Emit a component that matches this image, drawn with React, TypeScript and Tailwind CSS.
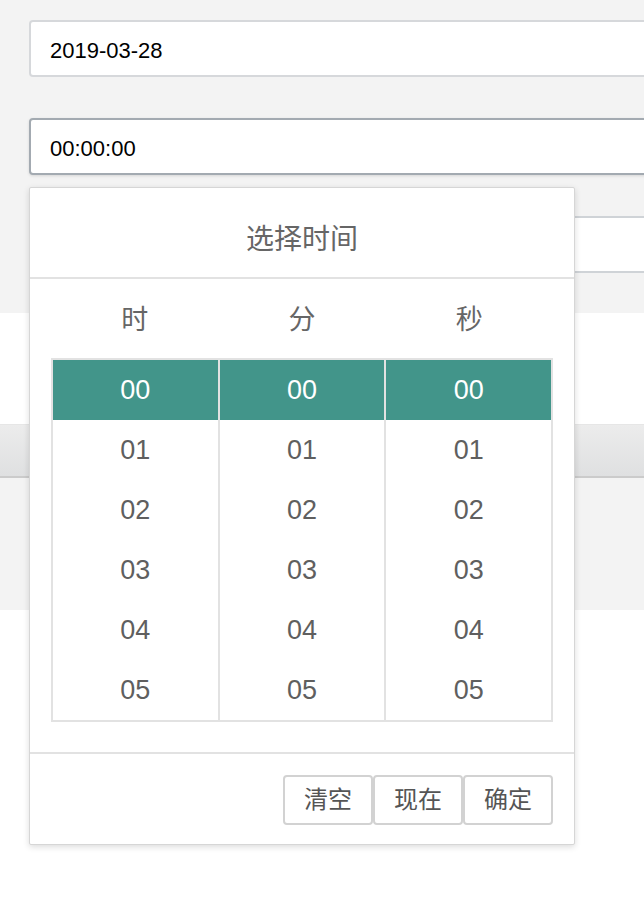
import { useState } from 'react'

const pad = (n: number) => String(n).padStart(2, '0')
const rows = [0, 1, 2, 3, 4, 5]
const cols = ['时', '分', '秒']

export default function App() {
  const [value] = useState('00:00:00')

  return (
    <div
      className="relative w-[644px] h-[914px] overflow-hidden bg-white"
      style={{ fontFamily: '"Liberation Sans", "Noto Sans CJK SC", sans-serif' }}
    >
      {/* form area */}
      <div className="bg-[#f3f3f3] pt-[20px] pb-[40px] pl-[29px] flex flex-col gap-[41px]">
        <div className="h-[57px] -mr-[20px] bg-white border-2 border-[#d6d8db] rounded-[4px] flex items-center pl-[19px] pt-[4px] text-[22px] text-black">
          2019-03-28
        </div>
        <div className="h-[57px] -mr-[20px] bg-white border-2 border-[#a3aab1] rounded-[4px] flex items-center pl-[19px] pt-[4px] text-[22px] text-black shadow-[0_1px_3px_rgba(0,0,0,0.12)]">
          {value}
        </div>
        <div className="h-[57px] -mr-[20px] bg-white border-2 border-[#cfd3d7] rounded-[4px]" />
      </div>
      <div className="h-[111px] bg-white" />
      <div className="h-[54px] bg-gradient-to-b from-[#ececec] to-[#dfe0e1] border-t border-[#e6e6e6] border-b-2 border-b-[#cbcbcb]" />
      <div className="h-[132px] bg-[#f3f3f3]" />

      {/* time picker popup */}
      <div className="absolute left-[29px] top-[187px] w-[546px] bg-white border border-[#d6d6d6] rounded-[2px] shadow-[0_2px_6px_rgba(0,0,0,0.14)] text-[#666]">
        <div className="h-[91px] border-b-2 border-[#e2e2e2] flex items-center justify-center pt-[14px] text-[28px]">
          选择时间
        </div>
        <div className="px-[21px]">
          <div className="flex h-[79px] items-center">
            {cols.map((c) => (
              <div key={c} className="flex-1 text-center text-[27px] pt-[4px]">
                {c}
              </div>
            ))}
          </div>
          <div className="flex border-2 border-[#e2e2e2]">
            {cols.map((c, i) => (
              <ul key={c} className={`flex-1 ${i > 0 ? 'border-l-2 border-[#e2e2e2]' : ''}`}>
                {rows.map((r) => (
                  <li
                    key={r}
                    className={`h-[60px] flex items-center justify-center text-[27px] ${
                      r === 0 ? 'bg-[#42958a] text-white' : 'text-[#5f5f5f]'
                    }`}
                  >
                    {pad(r)}
                  </li>
                ))}
              </ul>
            ))}
          </div>
        </div>
        <div className="h-[32px] border-b-2 border-[#e2e2e2]" />
        <div className="flex justify-end px-[21px] pt-[21px] pb-[19px]">
          {['清空', '现在', '确定'].map((t) => (
            <button
              key={t}
              className="w-[90px] h-[50px] border-2 border-[#d2d2d2] rounded-[4px] bg-white text-[24px] text-[#555] flex items-center justify-center"
            >
              {t}
            </button>
          ))}
        </div>
      </div>
    </div>
  )
}
